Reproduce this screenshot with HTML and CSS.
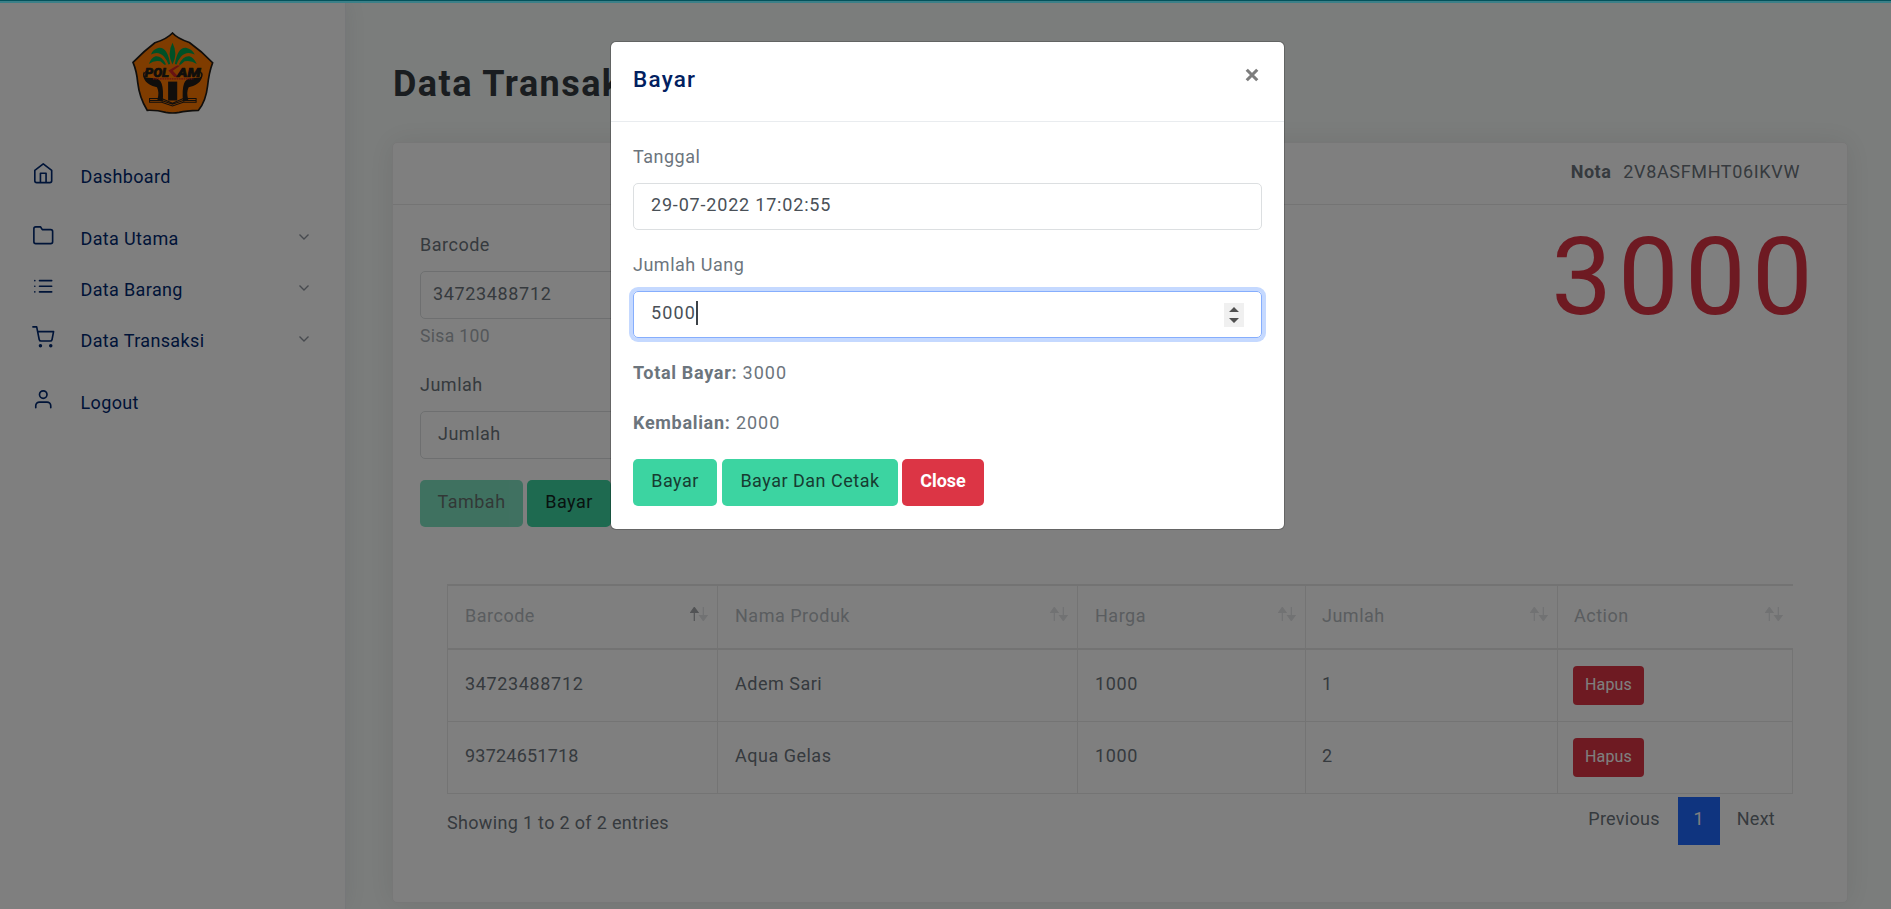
FILE: index.html
```html
<!DOCTYPE html>
<html lang="id">
<head>
<meta charset="utf-8">
<title>Data Transaksi</title>
<link rel="stylesheet" href="styles.css">
</head>
<body>
<svg class="defs" width="0" height="0">
  <symbol id="sort" viewBox="0 0 18 14"><path class="up" d="M4.300 14V4M.6 5.500L4.300.4 8 5.500z"/><path class="down" d="M13.300 0v10M9.600 8.500l3.700 5.100 3.700-5.100z"/></symbol>
  <symbol id="chev" viewBox="0 0 12 8"><path d="M1.500 1.500L6 6l4.500-4.500"/></symbol>
</svg>
<div class="page">
  <aside class="sidebar">
    <div class="brand">
      <svg class="logo" viewBox="0 0 243 243">
        <path d="M120 3Q134 19 170 31Q208 58 239 91Q228 120 224 160Q219 205 197 232Q160 233 140 238Q120 242 100 238Q75 231 45 232Q22 195 17 150Q14 116 3 90Q36 56 68 32Q103 21 120 3z" fill="#ff7800" stroke="#201c18" stroke-width="5"/>
        <g fill="#00a04c"><path d="M120 32Q137 65 120 96Q103 65 120 32z"/><path d="M113 95Q105 45 80 47Q62 51 56 67Q78 55 95 73Q104 84 108 96z"/><path d="M127 95Q135 45 160 47Q178 51 186 67Q162 55 145 73Q136 84 132 96z"/><path d="M101 96Q88 70 70 72Q56 77 50 95Q67 82 84 87L96 97z"/><path d="M139 96Q152 70 170 72Q184 77 192 95Q173 82 156 87L144 97z"/></g>
        <g fill="#201c18"><path d="M35 116Q27 145 61 160L74 164Q82 180 75 202L91 207Q94 170 88 153Q83 139 68 137L38 135z"/><path d="M207 116Q215 145 181 160L168 164Q160 180 167 202L151 207Q148 170 154 153Q159 139 174 137L204 135z"/><path d="M107 147h27v56h-27z"/></g>
        <path d="M40 137Q27 126 44 115M202 137Q215 126 198 115M52 197L88 197L120 211L152 197L190 197L190 208L152 208L120 219L88 208L52 208ZM52 203L88 203L120 214L152 203L190 203" fill="none" stroke="#201c18" stroke-width="3"/>
        <text class="mark" x="38" y="132" textLength="72" lengthAdjust="spacingAndGlyphs">POL</text>
        <path d="M134 99L108 114l17 19h13l-17-18 22-16z" fill="#d02424"/>
        <text class="mark" x="134" y="132" textLength="69" lengthAdjust="spacingAndGlyphs">AM</text>
        <path d="M62 139H182" stroke="#d02424" stroke-width="4" stroke-dasharray="5 2"/>
      </svg>
    </div>
    <nav class="menu">
      <a class="item gap"><svg class="ico" viewBox="0 0 24 24"><path d="M3 9l9-7 9 7v11a2 2 0 0 1-2 2H5a2 2 0 0 1-2-2zM9 22V12h6v10"/></svg><span>Dashboard</span></a>
      <a class="item"><svg class="ico" viewBox="0 0 24 24"><path d="M22 19a2 2 0 0 1-2 2H4a2 2 0 0 1-2-2V5a2 2 0 0 1 2-2h5l2 3h9a2 2 0 0 1 2 2z"/></svg><span>Data Utama</span><svg class="chev"><use href="#chev"/></svg></a>
      <a class="item"><svg class="ico" viewBox="0 0 24 24"><path d="M8 6h13M8 12h13M8 18h13M3 6h.01M3 12h.01M3 18h.01"/></svg><span>Data Barang</span><svg class="chev"><use href="#chev"/></svg></a>
      <a class="item gap"><svg class="ico" viewBox="0 0 24 24"><circle cx="9" cy="21" r="1"/><circle cx="20" cy="21" r="1"/><path d="M1 1h4l2.680 13.390a2 2 0 0 0 2 1.610h9.720a2 2 0 0 0 2-1.610L23 6H6"/></svg><span>Data Transaksi</span><svg class="chev"><use href="#chev"/></svg></a>
      <a class="item"><svg class="ico" viewBox="0 0 24 24"><path d="M20 21v-2a4 4 0 0 0-4-4H8a4 4 0 0 0-4 4v2"/><circle cx="12" cy="7" r="4"/></svg><span>Logout</span></a>
    </nav>
  </aside>
  <main class="main">
    <h2 class="title">Data Transaksi</h2>
    <section class="card">
      <header class="card-head"><b>Nota</b><span class="num">2V8ASFMHT06IKVW</span></header>
      <div class="entry">
        <div class="form">
          <label class="label">Barcode</label>
          <div class="input tight num">34723488712</div>
          <small class="hint">Sisa 100</small>
          <label class="label second">Jumlah</label>
          <div class="input">Jumlah</div>
          <div class="buttons"><button class="btn off">Tambah</button><button class="btn">Bayar</button></div>
        </div>
        <div class="total">3000</div>
      </div>
      <div class="list">
        <div class="row head">
          <div class="asc">Barcode<svg class="sort"><use href="#sort"/></svg></div><div>Nama Produk<svg class="sort"><use href="#sort"/></svg></div><div>Harga<svg class="sort"><use href="#sort"/></svg></div><div>Jumlah<svg class="sort"><use href="#sort"/></svg></div><div>Action<svg class="sort"><use href="#sort"/></svg></div>
        </div>
        <div class="row"><div class="num">34723488712</div><div>Adem Sari</div><div class="num">1000</div><div>1</div><div><button class="hapus">Hapus</button></div></div>
        <div class="row"><div class="num second-code">93724651718</div><div>Aqua Gelas</div><div class="num">1000</div><div>2</div><div><button class="hapus">Hapus</button></div></div>
        <div class="foot">
          <span class="info">Showing 1 to 2 of 2 entries</span>
          <div class="pager"><span>Previous</span><span class="current">1</span><span>Next</span></div>
        </div>
      </div>
    </section>
  </main>
</div>
<div class="overlay"></div>
<div class="loader"></div>
<div class="modal">
  <div class="modal-head"><h5>Bayar</h5><svg class="close" viewBox="0 0 12 12"><path d="M1.500 1.500l9 9M10.500 1.500l-9 9"/></svg></div>
  <div class="modal-body">
    <label class="label">Tanggal</label>
    <div class="input date">29-07-2022 17:02:55</div>
    <label class="label third">Jumlah Uang</label>
    <div class="input num focus"><span>5000</span><i class="caret"></i><svg class="spin" viewBox="0 0 20 24"><path d="M5 9l5-5 5 5zM5 15l5 5 5-5z"/></svg></div>
    <p><b>Total Bayar:</b> 3000</p>
    <p><b>Kembalian:</b> 2000</p>
    <div class="buttons"><button class="btn">Bayar</button><button class="btn wide">Bayar Dan Cetak</button><button class="btn red">Close</button></div>
  </div>
</div>
</body>
</html>
```
FILE: styles.css
```css
* { box-sizing: border-box; }
body { margin: 0; height: 909px; overflow: hidden; background: #f7fbf9; color: #6c757d; font: 18px/27px Roboto, "Liberation Sans", sans-serif; letter-spacing: .028em; }
.defs { position: absolute; }
b { font-weight: 700; }
button { font: inherit; letter-spacing: inherit; border: 0; }
.num { letter-spacing: .036em; }
.second-code { letter-spacing: .012em; }
.page { display: flex; height: 909px; }

.sidebar { width: 346px; flex: none; background: #fff; border-right: 1px solid #edeef2; box-shadow: 0 0 24px rgba(60, 70, 90, .1); }
.brand { display: flex; justify-content: center; padding: 32px 0 0 1px; }
.logo { width: 82px; height: 82px; }
.mark { font: italic 900 40px Roboto, sans-serif; letter-spacing: 0; fill: #201c18; stroke: #201c18; stroke-width: 2; }
.menu { padding: 37px 35px 0 32px; }
.item { display: flex; align-items: center; height: 51px; color: #012970; letter-spacing: .02em; }
.item.gap { margin-bottom: 11px; }
.ico { width: 22.5px; height: 22.5px; margin: -6px 26px 0 0; fill: none; stroke: #012970; stroke-width: 1.75; stroke-linecap: round; stroke-linejoin: round; }
.chev { width: 12px; height: 8px; margin: -3px 0 0 auto; fill: none; stroke: #8f959f; stroke-width: 1.400; }

.main { flex: 1; padding: 0 43px 0 46px; }
.title { margin: 0; padding: 62px 0 0 1px; height: 142px; font-size: 36px; line-height: 44px; font-weight: 700; color: #343a40; letter-spacing: .04em; }
.card { height: 761px; background: #fff; border: 1px solid #efefef; border-radius: 5px; box-shadow: 0 0 28px rgba(60, 50, 50, .1); }
.card-head { display: flex; justify-content: flex-end; gap: 12px; height: 62px; padding: 15px 47px 0 0; border-bottom: 1px solid #e9e9e9; }
.entry { display: flex; justify-content: space-between; padding: 0 28px 0 27px; height: 379px; }
.form { width: 560px; padding-top: 26px; }
.label { display: block; height: 40px; }
.input { display: flex; align-items: center; height: 47px; padding: 0 17px 4px; border: 1px solid #dcdfe1; border-radius: 5px; color: #495057; }
.card .label, .card .input { color: #6c757d; }
.card .input { height: 48px; padding-bottom: 3px; }
.card .input.tight { padding-left: 12px; }
.hint { display: block; padding-top: 4px; font-size: 17.500px; line-height: 27px; color: #a9afb5; letter-spacing: .02em; }
.label.second { padding-top: 21px; height: 61px; }
.buttons { display: flex; gap: 4px; margin-top: 21px; }
.btn { width: 84px; height: 47px; padding: 0 0 4px; border-radius: 5px; background: #3cd4a1; color: #173c31; white-space: nowrap; }
.card .btn { color: #12251e; }
.btn.off { width: 103px; opacity: .65; }
.btn.wide { width: 176px; margin-left: 1px; }
.btn.red { width: 82px; background: #dc3545; color: #fff; font-weight: 700; letter-spacing: 0; }
.total { padding-top: 18px; font-size: 108px; line-height: 108px; color: #dc3545; letter-spacing: .058em; }

.list { margin: 0 54px; }
.row { display: grid; grid-template-columns: 270px 360px 228px 252px 1fr; height: 72px; border-bottom: 1px solid #e9e9e9; border-left: 1px solid #e9e9e9; }
.row > div { padding: 20px 9px 0 17px; border-right: 1px solid #e9e9e9; }
.row.head { height: 66px; border-top: 2px solid #e6e6e6; border-bottom: 2px solid #e6e6e6; color: #b5bac0; }
.row.head > div { display: flex; justify-content: space-between; padding-top: 16px; }
.row.head > div:last-child { border-right: 0; padding-right: 10px; }
.row > div:nth-child(4) { padding-left: 16px; }
.row > div:last-child { padding-left: 16px; }
.row:not(.head) > div:last-child { padding: 16px 0 0 15px; }
.sort { width: 18px; height: 14px; margin-top: 5px; --up: #e3e4e6; }
.asc .sort { --up: #a4a7aa; }
.up { fill: var(--up); stroke: var(--up); }
.down { fill: #e3e4e6; stroke: #e3e4e6; }
.up, .down { stroke-width: 1.200; }
.hapus { display: block; width: 71px; height: 39px; padding: 0 0 3px; border-radius: 4px; background: #dc3545; color: #fff; font-size: 16px; letter-spacing: .01em; }
.foot { display: flex; justify-content: space-between; }
.info { padding-top: 15px; letter-spacing: .018em; }
.pager { display: flex; padding-top: 3px; }
.pager span { height: 48px; line-height: 44px; padding: 0 18px 0 17px; letter-spacing: .015em; }
.pager .current { width: 42px; padding: 0; text-align: center; background: #1e68ff; color: #fff; }

.overlay { position: absolute; inset: 0; background: rgba(0, 0, 0, .5); }
.loader { position: absolute; top: 0; left: 0; right: 0; height: 3px; background: #3b8088; border-top: 1px solid #04525b; }
.modal { position: absolute; left: 610px; top: 41px; width: 675px; height: 489px; background: #fff; background-clip: padding-box; border: 1px solid rgba(0, 0, 0, .2); border-radius: 6px; }
.modal-head { display: flex; justify-content: space-between; height: 80px; padding: 24px 25px 0 22px; border-bottom: 1px solid #e9ecef; }
.modal-head h5 { margin: 0; font-size: 22.500px; font-weight: 500; color: #012060; letter-spacing: .055em; }
.close { width: 14px; height: 14px; margin-top: 2px; stroke: #7d7d7d; stroke-width: 2.700; }
.modal-body { padding: 21px 22px 0; }
.modal .input.date { letter-spacing: .045em; }
.label.third { padding-top: 21px; height: 61px; }
.modal .input.focus { position: relative; border-color: #86aefd; box-shadow: 0 0 0 4px #c5d9ff; letter-spacing: .065em; }
.caret { width: 2px; height: 24px; background: #3c4248; }
.spin { width: 20px; height: 24px; margin: 4px 0 0 auto; background: #f0f0f0; fill: #505050; }
.modal p { margin: 0 0 23px; letter-spacing: .054em; }
.modal p b { letter-spacing: .038em; }
.modal .input.focus + p { margin-top: 21px; }
.modal .buttons { margin-top: 1px; }
```
